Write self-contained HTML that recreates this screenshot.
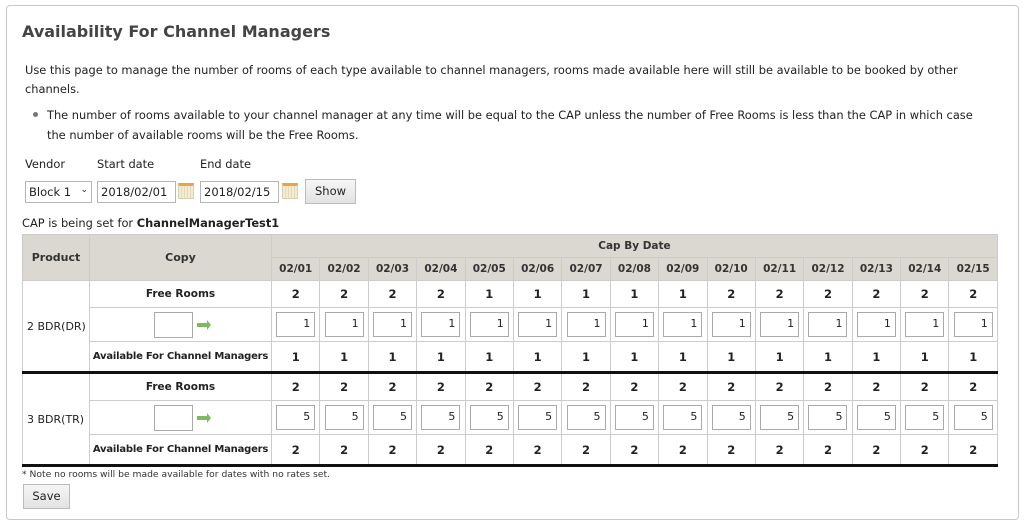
<!DOCTYPE html>
<html><head><meta charset="utf-8"><style>
*{box-sizing:border-box}
body{margin:0;width:1024px;height:528px;background:#fff;font-family:"DejaVu Sans","Liberation Sans",sans-serif;color:#222;position:relative;overflow:hidden}
.panel{position:absolute;left:6px;top:5px;width:1013px;height:515px;border:1px solid #c8c8c8;border-radius:4px}
.a{position:absolute;white-space:nowrap}
h1{position:absolute;left:22px;top:22px;margin:0;font-size:16px;font-weight:bold;color:#444}
.t{font-size:11.4px}
.inp{position:absolute;border:1px solid #b5b5b5;background:#fff;height:22px;font-size:11.5px;padding:3px 3px}
.btn{position:absolute;border:1px solid #bbb;background:linear-gradient(#f6f6f6,#e2e2e2);font-size:11.5px;text-align:center}
.cal{position:absolute;width:16px;height:16px;border:1px solid #d8cfb0;background:repeating-linear-gradient(90deg,#f3ecd3 0 2px,#e6dcbc 2px 3px);border-top:3px solid #e8a640}
table{position:absolute;left:22px;top:234px;border-collapse:collapse;table-layout:fixed;width:975px;font-size:10.5px}
td,th{border:1px solid #ccc;text-align:center;padding:0;white-space:nowrap}
th{background:#dbd7d1;font-weight:bold;color:#333}
td.b{font-weight:bold;font-size:11.5px}
td.s{font-weight:bold;font-size:10.5px}
td.av{font-weight:bold;font-size:10px;letter-spacing:-0.2px}
td.l{text-align:left;padding-left:4px;font-size:11px}
.box{display:inline-block;width:39px;height:25px;border:1px solid #aaa;text-align:right;padding:4px 4px 0 0;font-size:11px;vertical-align:middle}
.cb{display:inline-block;width:39px;height:26px;border:1px solid #aaa;vertical-align:middle}
.arr{display:inline-block;width:10px;height:4px;background:#7bbb5c;vertical-align:middle;margin-left:4px;position:relative}
.arr:after{content:"";position:absolute;right:-4px;top:-3px;border-left:4px solid #7bbb5c;border-top:5px solid transparent;border-bottom:5px solid transparent}
tr.thick td{border-bottom:3px solid #111}
</style></head><body>
<div class="panel"></div>
<h1>Availability For Channel Managers</h1>
<div class="a t" style="left:25px;top:63px">Use this page to manage the number of rooms of each type available to channel managers, rooms made available here will still be available to be booked by other</div>
<div class="a t" style="left:25px;top:82px">channels.</div>
<div class="a" style="left:33px;top:112px;width:5px;height:5px;border-radius:50%;background:#777"></div>
<div class="a t" style="left:47px;top:108px">The number of rooms available to your channel manager at any time will be equal to the CAP unless the number of Free Rooms is less than the CAP in which case</div>
<div class="a t" style="left:47px;top:128px">the number of available rooms will be the Free Rooms.</div>
<div class="a t" style="left:25px;top:157px">Vendor</div>
<div class="a t" style="left:97px;top:157px">Start date</div>
<div class="a t" style="left:200px;top:157px">End date</div>
<div class="inp" style="left:25px;top:181px;width:67px">Block 1 <span style="float:right;font-size:9px">&#8964;</span></div>
<div class="inp" style="left:97px;top:181px;width:79px">2018/02/01</div>
<div class="cal" style="left:178px;top:183px"></div>
<div class="inp" style="left:200px;top:181px;width:79px">2018/02/15</div>
<div class="cal" style="left:282px;top:183px"></div>
<div class="btn" style="left:305px;top:179px;width:51px;height:25px;line-height:23px">Show</div>
<div class="a t" style="left:22px;top:216px">CAP is being set for <b>ChannelManagerTest1</b></div>
<table>
<colgroup><col style="width:67px"><col style="width:182px"><col span="15" style="width:48.4px"></colgroup>
<tr style="height:23px"><th rowspan="2" style="font-size:11px">Product</th><th rowspan="2" style="font-size:11px">Copy</th><th colspan="15">Cap By Date</th></tr>
<tr style="height:23px"><th>02/01</th><th>02/02</th><th>02/03</th><th>02/04</th><th>02/05</th><th>02/06</th><th>02/07</th><th>02/08</th><th>02/09</th><th>02/10</th><th>02/11</th><th>02/12</th><th>02/13</th><th>02/14</th><th>02/15</th></tr>
<tr style="height:27px"><td rowspan="3" class="l" style="border-bottom:3px solid #111">2 BDR(DR)</td><td class="s">Free Rooms</td>
<td class="b">2</td><td class="b">2</td><td class="b">2</td><td class="b">2</td><td class="b">1</td><td class="b">1</td><td class="b">1</td><td class="b">1</td><td class="b">1</td><td class="b">2</td><td class="b">2</td><td class="b">2</td><td class="b">2</td><td class="b">2</td><td class="b">2</td></tr>
<tr style="height:34px"><td><span class="cb"></span><span class="arr"></span></td>
<td><span class="box">1</span></td><td><span class="box">1</span></td><td><span class="box">1</span></td><td><span class="box">1</span></td><td><span class="box">1</span></td><td><span class="box">1</span></td><td><span class="box">1</span></td><td><span class="box">1</span></td><td><span class="box">1</span></td><td><span class="box">1</span></td><td><span class="box">1</span></td><td><span class="box">1</span></td><td><span class="box">1</span></td><td><span class="box">1</span></td><td><span class="box">1</span></td></tr>
<tr class="thick" style="height:31px"><td class="av">Available For Channel Managers</td>
<td class="b">1</td><td class="b">1</td><td class="b">1</td><td class="b">1</td><td class="b">1</td><td class="b">1</td><td class="b">1</td><td class="b">1</td><td class="b">1</td><td class="b">1</td><td class="b">1</td><td class="b">1</td><td class="b">1</td><td class="b">1</td><td class="b">1</td></tr>
<tr style="height:28px"><td rowspan="3" class="l" style="border-bottom:3px solid #111">3 BDR(TR)</td><td class="s">Free Rooms</td>
<td class="b">2</td><td class="b">2</td><td class="b">2</td><td class="b">2</td><td class="b">2</td><td class="b">2</td><td class="b">2</td><td class="b">2</td><td class="b">2</td><td class="b">2</td><td class="b">2</td><td class="b">2</td><td class="b">2</td><td class="b">2</td><td class="b">2</td></tr>
<tr style="height:34px"><td><span class="cb"></span><span class="arr"></span></td>
<td><span class="box">5</span></td><td><span class="box">5</span></td><td><span class="box">5</span></td><td><span class="box">5</span></td><td><span class="box">5</span></td><td><span class="box">5</span></td><td><span class="box">5</span></td><td><span class="box">5</span></td><td><span class="box">5</span></td><td><span class="box">5</span></td><td><span class="box">5</span></td><td><span class="box">5</span></td><td><span class="box">5</span></td><td><span class="box">5</span></td><td><span class="box">5</span></td></tr>
<tr class="thick" style="height:31px"><td class="av">Available For Channel Managers</td>
<td class="b">2</td><td class="b">2</td><td class="b">2</td><td class="b">2</td><td class="b">2</td><td class="b">2</td><td class="b">2</td><td class="b">2</td><td class="b">2</td><td class="b">2</td><td class="b">2</td><td class="b">2</td><td class="b">2</td><td class="b">2</td><td class="b">2</td></tr>
</table>
<div class="a" style="left:22px;top:469px;font-size:9.2px;color:#333">* Note no rooms will be made available for dates with no rates set.</div>
<div class="btn" style="left:23px;top:484px;width:47px;height:25px;line-height:23px">Save</div>
</body></html>
